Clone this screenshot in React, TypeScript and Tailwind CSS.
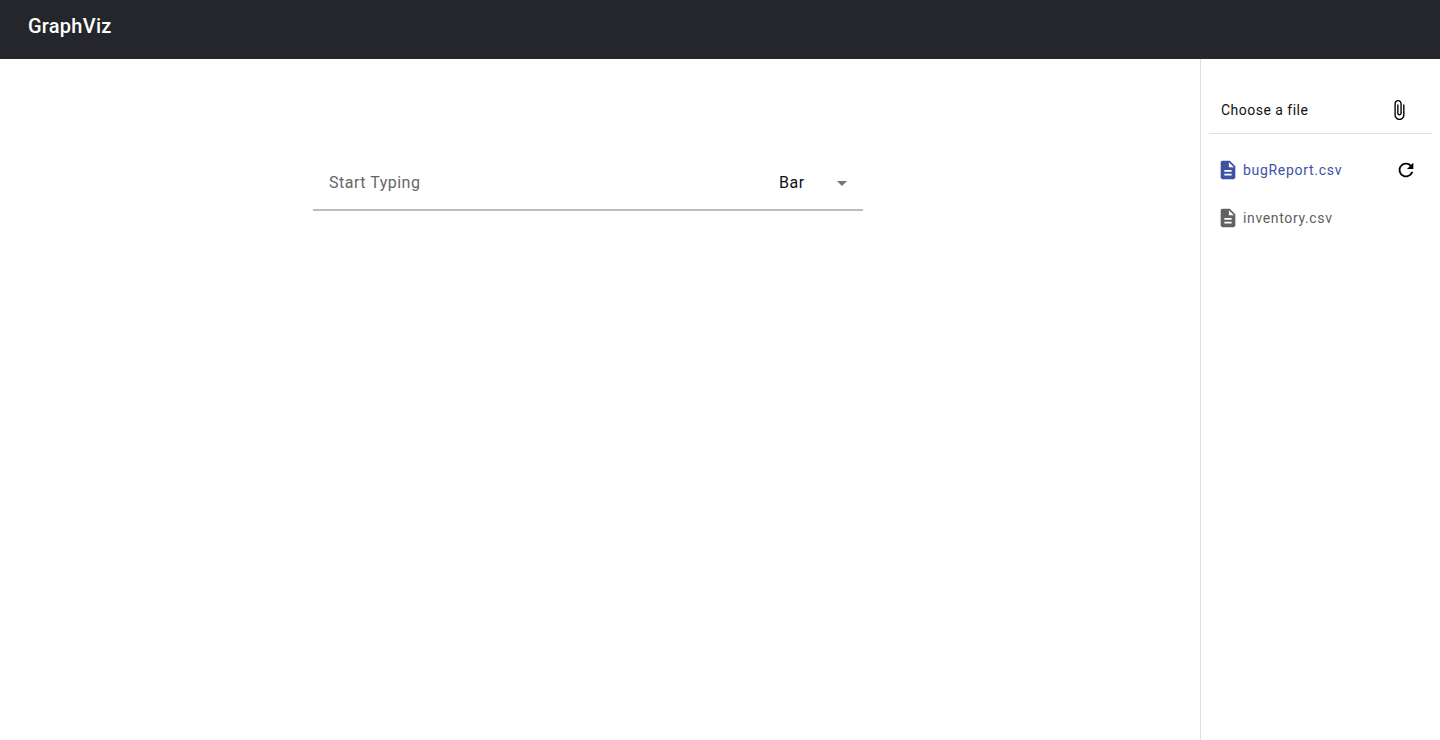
const FILE_ICON = "M14 2H6c-1.1 0-1.99.9-1.99 2L4 20c0 1.1.89 2 1.99 2H18c1.1 0 2-.9 2-2V8l-6-6zm2 16H8v-2h8v2zm0-4H8v-2h8v2zm-3-5V3.5L18.5 9H13z";
const ATTACH_ICON = "M16.5 6v11.5c0 2.21-1.79 4-4 4s-4-1.79-4-4V5c0-1.38 1.12-2.5 2.5-2.5s2.5 1.12 2.5 2.5v10.5c0 .55-.45 1-1 1s-1-.45-1-1V6H10v9.5c0 1.38 1.12 2.5 2.5 2.5s2.5-1.12 2.5-2.5V5c0-2.21-1.79-4-4-4S7 2.79 7 5v12.5c0 3.04 2.46 5.5 5.5 5.5s5.5-2.46 5.5-5.5V6h-1.5z";
const REFRESH_ICON = "M17.65 6.35C16.2 4.9 14.21 4 12 4c-4.42 0-7.99 3.58-7.99 8s3.57 8 7.99 8c3.73 0 6.84-2.55 7.73-6h-2.08c-.82 2.33-3.04 4-5.65 4-3.31 0-6-2.69-6-6s2.69-6 6-6c1.66 0 3.14.69 4.22 1.78L13 11h7V4l-2.35 2.35z";

function Icon({ d, className }: { d: string; className?: string }) {
  return (
    <svg viewBox="0 0 24 24" fill="currentColor" className={className}>
      <path d={d} />
    </svg>
  );
}

export default function App() {
  return (
    <div className="flex h-[740px] flex-col overflow-hidden bg-white font-['Roboto',sans-serif]">
      <header className="flex h-[59px] shrink-0 items-center bg-[#25262b] px-7 pb-[8px]">
        <h1 className="text-[20px] leading-[28px] font-medium tracking-[0.25px] text-white">GraphViz</h1>
      </header>
      <div className="flex min-h-0 flex-1">
        <main className="flex-1 pt-[92px]">
          <div className="ml-[313px] flex h-[60px] w-[550px] items-center border-b-2 border-[#bdbdbd] pt-[6px]">
            <input
              placeholder="Start Typing"
              className="min-w-0 flex-1 pl-4 text-[16px] tracking-[0.5px] text-black outline-none placeholder:text-[#666666]"
            />
            <span className="w-[58px] text-[16px] tracking-[0.5px] text-[#111111]">Bar</span>
            <svg viewBox="0 0 10 5" fill="currentColor" className="mr-[16px] h-[5px] w-[10px] text-[#757575]">
              <path d="M0 0l5 5 5-5z" />
            </svg>
          </div>
        </main>
        <aside className="w-[240px] shrink-0 border-l border-[#e0e0e0] px-2 pt-[27px]">
          <div className="flex h-[48px] items-center justify-between border-b border-[#e0e0e0] pt-[1px] pr-[22px] pl-3">
            <span className="text-[14px] tracking-[0.48px] text-[#111111]">Choose a file</span>
            <Icon d={ATTACH_ICON} className="h-[22px] w-[22px] text-black" />
          </div>
          <ul className="pt-[12px]">
            <li className="flex h-[48px] items-center gap-[4px] pr-[15px] pl-[8px] text-[#3f51a5]">
              <Icon d={FILE_ICON} className="h-[22px] w-[22px] shrink-0" />
              <span className="flex-1 text-[14px] tracking-[0.7px]">bugReport.csv</span>
              <Icon d={REFRESH_ICON} className="h-[22px] w-[22px] shrink-0 text-black" />
            </li>
            <li className="flex h-[48px] items-center gap-[4px] pl-[8px] text-[#616161]">
              <Icon d={FILE_ICON} className="h-[22px] w-[22px] shrink-0" />
              <span className="flex-1 text-[14px] tracking-[0.65px]">inventory.csv</span>
            </li>
          </ul>
        </aside>
      </div>
    </div>
  );
}
